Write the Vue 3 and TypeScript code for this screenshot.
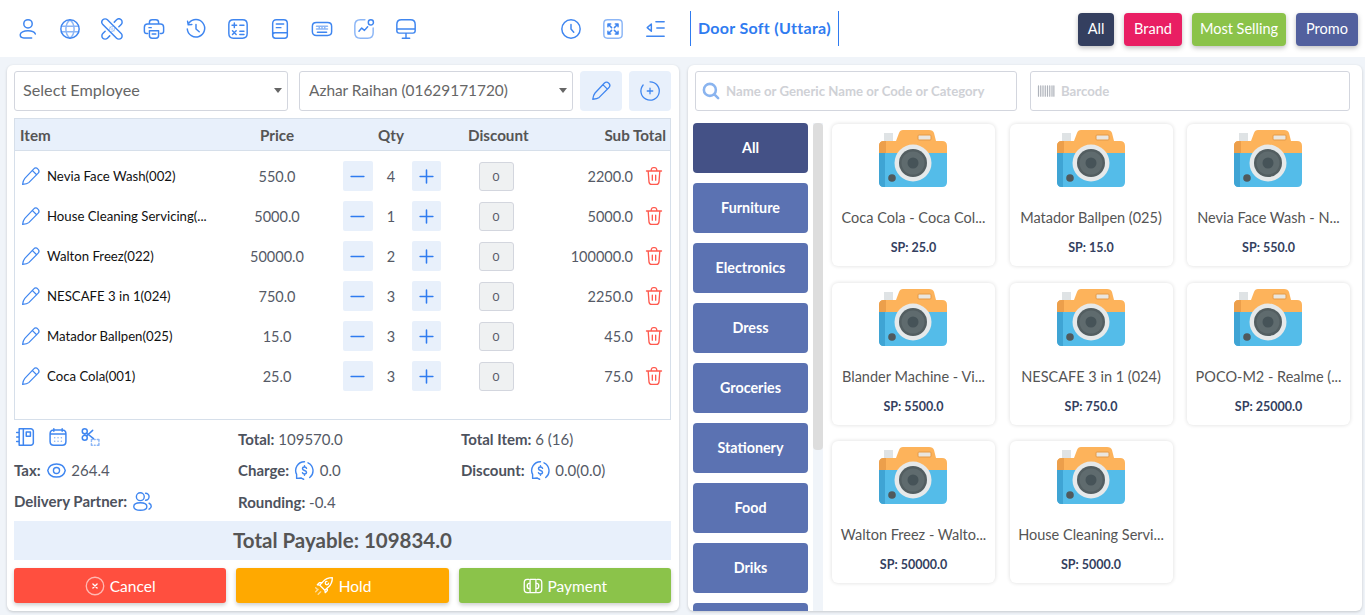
<template>
  <div class="pos">
    <header class="topbar">
      <div class="tools">
        <Ic v-for="n in leftTools" :key="n" :name="n" class="tool" />
      </div>
      <div class="tools tools-mid">
        <Ic v-for="n in midTools" :key="n" :name="n" class="tool" />
      </div>
      <div class="outlet">Door Soft (Uttara)</div>
      <div class="filters">
        <button class="filter f-all">All</button>
        <button class="filter f-brand">Brand</button>
        <button class="filter f-most">Most Selling</button>
        <button class="filter f-promo">Promo</button>
      </div>
    </header>

    <main class="content">
      <section class="panel cart">
        <div class="selects">
          <div class="select sel-1">Select Employee<span class="caret" /></div>
          <div class="select sel-2">Azhar Raihan (01629171720)<span class="caret" /></div>
          <button class="square"><Ic name="pencil" class="square-ic" /></button>
          <button class="square"><Ic name="plusCircle" class="square-ic" /></button>
        </div>

        <div class="table">
          <div class="grid head">
            <div>Item</div>
            <div class="c">Price</div>
            <div class="c">Qty</div>
            <div class="c">Discount</div>
            <div class="r">Sub Total</div>
          </div>
          <div class="rows">
            <div v-for="row in rows" :key="row.name" class="grid row">
              <div class="name"><Ic name="pencil" class="row-pen" /><span>{{ row.name }}</span></div>
              <div class="c">{{ row.price }}</div>
              <div class="qty">
                <span class="step"><Ic name="minus" class="step-ic" /></span>
                <span class="num">{{ row.qty }}</span>
                <span class="step"><Ic name="plus" class="step-ic" /></span>
              </div>
              <div class="c"><span class="disc">0</span></div>
              <div class="sub">{{ row.sub }}<Ic name="trash" class="trash" /></div>
            </div>
          </div>
        </div>

        <div class="summary">
          <div class="sum-icons">
            <Ic name="notebook" class="sum-ic" />
            <Ic name="calendar" class="sum-ic" />
            <Ic name="scissors" class="sum-ic" />
          </div>
          <div><b>Total:</b> 109570.0</div>
          <div><b>Total Item:</b> 6 (16)</div>
          <div><b>Tax:</b> <Ic name="eye" class="in-ic" /> 264.4</div>
          <div><b>Charge:</b> <Ic name="dollar" class="in-ic" /> 0.0</div>
          <div><b>Discount:</b> <Ic name="dollar" class="in-ic" /> 0.0(0.0)</div>
          <div><b>Delivery Partner:</b> <Ic name="people" class="in-ic" /></div>
          <div><b>Rounding:</b> -0.4</div>
        </div>

        <div class="payable">Total Payable: 109834.0</div>

        <div class="actions">
          <button class="act cancel"><Ic name="xCircle" class="act-ic" />Cancel</button>
          <button class="act hold"><Ic name="rocket" class="act-ic" />Hold</button>
          <button class="act pay"><Ic name="money" class="act-ic" />Payment</button>
        </div>
      </section>

      <section class="panel shop">
        <div class="searches">
          <div class="search s-name">
            <Ic name="search" class="search-ic" />
            <span>Name or Generic Name or Code or Category</span>
          </div>
          <div class="search s-code">
            <Ic name="barcode" class="code-ic" />
            <span>Barcode</span>
          </div>
        </div>

        <div class="catalog">
          <div class="cats">
            <button v-for="(c, i) in categories" :key="i" class="cat" :class="{ on: i === 0 }">{{ c }}</button>
          </div>
          <div class="track"><div class="thumb" /></div>
          <div class="products">
            <article v-for="p in products" :key="p.name" class="card">
              <svg class="camera" viewBox="0 0 68 57" width="68" height="57">
                <rect x="5" y="3" width="9" height="10" fill="#dfe3e5" />
                <path d="M17 11 20 3Q21 0 24 0H50Q54 0 55 3L57 11H63Q68 11 68 16V24H0V16Q0 11 5 11Z" fill="#fdb35b" />
                <path d="M0 16Q0 11 5 11H7V24H0Z" fill="#ec9f4b" />
                <rect x="39" y="5" width="13" height="5" rx="1" fill="#eae6df" stroke="#e59a47" />
                <path d="M0 23H68V52Q68 57 63 57H5Q0 57 0 52Z" fill="#54bce9" />
                <path d="M0 23H6V57H5Q0 57 0 52Z" fill="#3fa4d4" />
                <circle cx="34" cy="33" r="18.500" fill="#e6e9ea" />
                <circle cx="34" cy="33" r="14" fill="#535e61" />
                <circle cx="34" cy="33" r="11.500" fill="#5f6b6e" />
                <circle cx="34" cy="33" r="5.500" fill="#465358" />
                <circle cx="13" cy="48" r="3.800" fill="#50595c" />
              </svg>
              <div class="p-name">{{ p.name }}</div>
              <div class="p-price">SP: {{ p.price }}</div>
            </article>
          </div>
        </div>
      </section>
    </main>
  </div>
</template>

<script setup lang="ts">
import { h } from 'vue'

// [main strokes, lighter strokes]
const icons: Record<string, [string, string?]> = {
  user: ['M12 11a4.600 4.600 0 1 0 0-9.200 4.600 4.600 0 0 0 0 9.200ZM20 17.500c-1-2.600-4.400-3.500-8-3.500-4.600 0-8.500 1.500-8.500 4.300 0 2 1.700 3.400 4 3.400h8.500'],
  globe: ['M12 2a10 10 0 1 0 0 20 10 10 0 0 0 0-20Z', 'M12 2c-3.300 2.500-4.500 6-4.500 10s1.200 7.500 4.500 10c3.300-2.500 4.500-6 4.500-10S15.300 4.500 12 2ZM2.500 9h19M2.500 15h19'],
  bandage: ['M7 2 22 17A3.500 3.500 0 0 1 17 22L2 7A3.500 3.500 0 0 1 7 2ZM14.500 4.500 17 2A3.500 3.500 0 0 1 22 7L19.500 9.500M9.500 19.500 7 22A3.500 3.500 0 0 1 2 17L4.500 14.500', 'M10 10h.1M12 12h.1M14 14h.1M12 9.500h.1M14.500 12h.1M9.500 12h.1M12 14.500h.1'],
  printer: ['M7 6.500V5c0-2 1-3 3-3h4c2 0 3 1 3 3v1.500M5 17H4c-1.500 0-2.500-1-2.500-2.500V10c0-2 1.500-3.500 3.500-3.500h14c2 0 3.500 1.500 3.500 3.500v4.500c0 1.500-1 2.500-2.500 2.500h-1M7 14h10v5c0 2-1 3-3 3h-4c-2 0-3-1-3-3ZM6.500 10.500h2.500M10 17.500h4'],
  history: ['M4.400 5.500A9.500 9.500 0 1 1 2.500 12M2.800 3.500 3.500 7.500 7.500 7M12 7v5l3.500 3'],
  calc: ['M7 2h10c3.300 0 5 1.700 5 5v10c0 3.300-1.700 5-5 5H7c-3.300 0-5-1.700-5-5V7c0-3.300 1.700-5 5-5ZM5.500 8h5M8 5.500v5M14 8h4.500M14 14.500h4.500M14 18h4.500M6 14l4 4M10 14l-4 4'],
  book: ['M4 18.500V6c0-2.500 1.500-4 4-4h8c2.500 0 4 1.500 4 4v13c0 1.800-1.200 3-3 3H7c-1.800 0-3-1.300-3-3.500 0-1.500 1-2.500 2.500-2.500H20M8 6.500h8M8 10.500h5'],
  keyboard: ['M6 5h12c3 0 4.500 1.500 4.500 4v6c0 2.500-1.500 4-4.500 4H6c-3 0-4.500-1.500-4.500-4V9c0-2.500 1.500-4 4.500-4ZM7 15.500h10', 'M6 9h12M6 12h12M6 9v.1M9 9v3M12 9v3M15 9v3'],
  chart: ['M19.500 2a2.800 2.800 0 1 0 0 5.600 2.800 2.800 0 0 0 0-5.600ZM6.500 14.500l3-3.500 3 2.500 3.500-4', 'M13 2H8C3.500 2 2 4 2 8v8c0 4 1.500 6 6 6h8c4 0 6-2 6-6v-5'],
  monitor: ['M7 2h10c3.300 0 5 1.700 5 5v7c0 1.500-1 2.500-2.500 2.500h-15C3 16.500 2 15.500 2 14V7c0-3.300 1.700-5 5-5ZM2 12h20M12 16.500V22M8 22h8'],
  clock: ['M12 2a10 10 0 1 0 0 20 10 10 0 0 0 0-20ZM12 7v5l3 3.500'],
  expand: ['M10.500 10.500 6.500 6.500M6.500 9.500v-3h3M13.500 10.500l4-4M14.500 6.500h3v3M10.500 13.500l-4 4M6.500 14.500v3h3M13.500 13.500l4 4M17.500 14.500v3h-3', 'M6 2h12c2.700 0 4 1.300 4 4v12c0 2.700-1.300 4-4 4H6c-2.700 0-4-1.300-4-4V6c0-2.700 1.300-4 4-4Z'],
  collapse: ['M13 4h9M14 11h8M3 20h19M8 6.500 3.500 10.500 8 14.500Z'],
  pencil: ['M3 21c.3-2.500 1-5 2.500-6.800L15.500 3.500c1.500-1.500 3.500-1.500 5 0s1.500 3.500 0 5L10 19c-1.800 1.500-4.500 1.800-7 2ZM14 5l5 5'],
  plusCircle: ['M4.500 5.500A10 10 0 1 0 12 2M9 12h6M12 9v6'],
  minus: ['M3 12h18'],
  plus: ['M3 12h18M12 3v18'],
  trash: ['M3 6h18M8.500 5.500l.5-2C9.300 2.500 10 2 11 2h2c1 0 1.700.5 2 1.500l.5 2M5 6l1 13c.2 2 1.300 3 3 3h6c1.700 0 2.800-1 3-3l1-13M10 11v6M14 11v6'],
  notebook: ['M5 2h14c1.500 0 3 1.500 3 3v14c0 1.500-1.500 3-3 3H5ZM2 6.500h3M2 12h3M2 17.500h3M10 2v20M13.500 6h5v5h-5Z'],
  calendar: ['M7 2v3M17 2v3M3 8.500h18M7 3.500h10c3 0 4.500 1.500 4.500 4.500v9.500c0 3-1.500 4.500-4.500 4.500H7c-3 0-4.500-1.500-4.500-4.500V8c0-3 1.500-4.500 4.500-4.500Z', 'M8 13h.1M12 13h.1M16 13h.1M8 17h.1M12 17h.1M16 17h.1'],
  scissors: ['M4.500 2a3 3 0 1 0 0 6 3 3 0 0 0 0-6ZM4.500 10a3 3 0 1 0 0 6 3 3 0 0 0 0-6ZM7 7.500 15 14M7 10.500 14 4', 'M12.500 15h1M16 15h1M19.500 15h2v2M21.500 19.500v2.500h-2M17 22h-1M13.500 22h-1v-2M12.500 17.500v-1'],
  eye: ['M12 4.500c5 0 9 3 10 7.500-1 4.500-5 7.500-10 7.500S3 16.500 2 12c1-4.500 5-7.500 10-7.500ZM12 8.500a3.500 3.500 0 1 0 0 7 3.500 3.500 0 0 0 0-7Z'],
  dollar: ['M16 3.200A10 10 0 0 1 18 20M12 2a10 10 0 0 0-9 14.500L3 21l5-.5a10 10 0 0 0 3 1.500M14.300 9.500C14 8.500 13 8 12 8c-1.200 0-2.300.7-2.300 2 0 2.600 4.600 1.400 4.600 4 0 1.300-1.100 2-2.300 2-1 0-2-.5-2.300-1.500M12 6.500V8M12 16v1.500'],
  people: ['M9.500 2a4.500 4.500 0 1 0 0 9 4.500 4.500 0 0 0 0-9ZM2 18c0-3 3-4.500 7.500-4.500S17 15 17 18c0 2.500-3 4-7.500 4S2 20.500 2 18ZM15.500 2.500a4 4 0 0 1 0 8M19.500 14c1.500.7 2.500 2 2.500 3.500s-1 2.700-2.500 3.300'],
  xCircle: ['M9.500 9.500l5 5M14.500 9.500l-5 5', 'M12 1.500a10.500 10.500 0 1 0 0 21 10.500 10.500 0 0 0 0-21Z'],
  rocket: ['M22 2c-5 0-8.500 1.500-11.500 5L7 11l6 6 4-3.500c3.500-3 5-6.500 5-11.500ZM10 8H6.500L4 10.500l3 .5M16 14v3.500L13.500 20l-.5-3M15.500 6.500a2 2 0 1 0 2 2', 'M5 16l-3 3M8 19l-3 3M2 14l2 2'],
  money: ['M7 4H5C2.500 4 1.500 5.500 1.500 8v8c0 2.500 1 4 3.500 4h2M17 4h2c2.500 0 3.500 1.500 3.500 4v8c0 2.500-1 4-3.500 4h-2M8.500 4h7v16h-7ZM15.500 8.500c2 0 3.500 1.500 3.500 3.500s-1.500 3.500-3.500 3.500M8.500 8.500C6.500 8.500 5 10 5 12s1.500 3.500 3.500 3.500'],
  search: ['M10.500 2.500a8 8 0 1 0 0 16 8 8 0 0 0 0-16ZM16.500 16.500l5 5'],
  barcode: ['M2 5v14M5 5v14M8 5v14M11 5v14M14 5v14M17 5v14M20 5v14M22.500 5v14'],
}

// small functional icon, strokes come from the table above
const Ic = (props: { name: string }) => {
  const [main, light] = icons[props.name]
  return h('svg', { viewBox: '0 0 24 24', fill: 'none', stroke: 'currentColor', 'stroke-width': 1.6, 'stroke-linecap': 'round', 'stroke-linejoin': 'round' }, [
    h('path', { d: main }),
    light ? h('path', { d: light, opacity: 0.6 }) : null,
  ])
}
Ic.props = ['name']

const leftTools = ['user', 'globe', 'bandage', 'printer', 'history', 'calc', 'book', 'keyboard', 'chart', 'monitor']
const midTools = ['clock', 'expand', 'collapse']

const rows = [
  { name: 'Nevia Face Wash(002)', price: '550.0', qty: 4, sub: '2200.0' },
  { name: 'House Cleaning Servicing(...', price: '5000.0', qty: 1, sub: '5000.0' },
  { name: 'Walton Freez(022)', price: '50000.0', qty: 2, sub: '100000.0' },
  { name: 'NESCAFE 3 in 1(024)', price: '750.0', qty: 3, sub: '2250.0' },
  { name: 'Matador Ballpen(025)', price: '15.0', qty: 3, sub: '45.0' },
  { name: 'Coca Cola(001)', price: '25.0', qty: 3, sub: '75.0' },
]

// the ninth button is scrolled out of sight, its label is not visible
const categories = ['All', 'Furniture', 'Electronics', 'Dress', 'Groceries', 'Stationery', 'Food', 'Driks', '']

const products = [
  { name: 'Coca Cola - Coca Col...', price: '25.0' },
  { name: 'Matador Ballpen (025)', price: '15.0' },
  { name: 'Nevia Face Wash - N...', price: '550.0' },
  { name: 'Blander Machine - Vi...', price: '5500.0' },
  { name: 'NESCAFE 3 in 1 (024)', price: '750.0' },
  { name: 'POCO-M2 - Realme (...', price: '25000.0' },
  { name: 'Walton Freez - Walto...', price: '50000.0' },
  { name: 'House Cleaning Servi...', price: '5000.0' },
]
</script>

<style>
html, body { margin: 0; height: 100%; overflow: hidden; background: #f0f4f9; }
</style>

<style scoped>
.pos {
  width: 1365px;
  height: 615px;
  overflow: hidden;
  font-family: Lato, "Noto Sans", sans-serif;
  color: #555a66;
  background: #f0f4f9;
}

button { font-family: inherit; border: 0; cursor: pointer; padding: 0; }
svg { display: block; }

/* top bar */
.topbar {
  display: flex;
  align-items: center;
  height: 57px;
  padding: 0 7px 0 17px;
  box-sizing: border-box;
  background: #fff;
}
.tools { display: flex; gap: 20px; }
.tools-mid { margin-left: 143px; }
.tool { width: 22px; height: 22px; color: #3f86f0; }
.outlet {
  margin-left: 24px;
  height: 35px;
  line-height: 33px;
  padding: 0 7px;
  border-left: 1px solid #2f7bf0;
  border-right: 1px solid #2f7bf0;
  color: #2f7bf0;
  font-weight: 700;
  font-size: 16px;
  letter-spacing: .3px;
  white-space: nowrap;
}
.filters { display: flex; gap: 10px; margin-left: auto; margin-top: 1px; }
.filter {
  height: 33px;
  padding-bottom: 2px;
  border-radius: 4px;
  color: #fff;
  font-size: 14.500px;
  box-shadow: 0 2px 5px rgba(0, 0, 0, .25);
}
.f-all { width: 36px; background: #343f5f; }
.f-brand { width: 58px; background: #e91e63; }
.f-most { width: 94px; background: #8bc34a; }
.f-promo { width: 62px; background: #52609e; }

/* panels */
.content { display: flex; gap: 9px; padding: 8px 3px 0 7px; }
.panel {
  height: 546px;
  background: #fff;
  border-radius: 6px;
  box-sizing: border-box;
  box-shadow: 0 1px 3px rgba(0, 0, 0, .18);
}

.cart { width: 672px; padding: 6px 8px 6px 7px; }
.selects { display: flex; }
.select {
  position: relative;
  height: 40px;
  line-height: 36px;
  box-sizing: border-box;
  padding-left: 8px;
  border: 1px solid #d3d6de;
  border-radius: 3px;
  font-size: 16.200px;
  color: #666;
}
.sel-1 { width: 274px; margin-right: 11px; }
.sel-2 { width: 274px; margin-right: 7px; font-size: 15.400px; padding-left: 9px; }
.caret {
  position: absolute;
  right: 5px;
  top: 16px;
  border: 4px solid transparent;
  border-top: 5px solid #666;
  border-bottom: 0;
}
.square {
  display: flex;
  align-items: center;
  justify-content: center;
  width: 42px;
  height: 40px;
  margin-right: 7px;
  border-radius: 4px;
  background: #e8f0fb;
}
.square:last-child { margin-right: 0; }
.square-ic { width: 22px; height: 22px; color: #3f86f0; stroke-width: 1.400; }

/* cart table */
.table {
  height: 302px;
  margin-top: 7px;
  box-sizing: border-box;
  border: 1px solid #d6dfea;
}
.grid {
  display: grid;
  grid-template-columns: 220px 74px 154px 56px 142px;
  align-items: center;
  padding: 0 4px 0 5px;
}
.head {
  height: 32px;
  box-sizing: border-box;
  background: #e8f0fb;
  border-bottom: 1px solid #d6dfea;
  font-weight: 700;
  font-size: 15.200px;
  color: #555;
}
.c { text-align: center; }
.r { text-align: right; }
.rows { padding-top: 5px; }
.row { height: 40px; font-size: 14.500px; }
.name { display: flex; align-items: center; gap: 6px; color: #111; font-size: 13.200px; white-space: nowrap; }
.row-pen { width: 21px; height: 21px; color: #3f86f0; flex: none; stroke-width: 1.400; }
.qty { display: flex; align-items: center; justify-content: center; padding-left: 2px; }
.step {
  display: flex;
  align-items: center;
  justify-content: center;
  width: 29.500px;
  height: 30px;
  background: #e8f0fb;
  border-radius: 2px;
}
.step-ic { width: 17px; height: 17px; color: #2f7bf0; stroke-width: 2.200; }
.num { width: 39px; padding-right: 2px; box-sizing: border-box; text-align: center; }
.disc {
  display: inline-block;
  width: 35px;
  height: 29px;
  line-height: 27px;
  box-sizing: border-box;
  border: 1px solid #d3d6de;
  border-radius: 3px;
  background: #eff1f2;
  font-size: 12px;
  text-align: center;
}
.sub { display: flex; align-items: center; justify-content: flex-end; }
.trash { width: 20px; height: 20px; margin-left: 11px; margin-right: 2px; color: #ff5a4f; }

/* summary */
.summary {
  display: grid;
  grid-template-columns: 224px 223px 1fr;
  grid-auto-rows: 31.500px;
  align-items: center;
  height: 101px;
  padding-top: 3px;
  box-sizing: border-box;
  font-size: 15px;
}
.summary b { color: #4d525d; font-weight: 700; }
.sum-icons { display: flex; gap: 13px; margin: -3px 0 0 1px; }
.sum-ic { width: 20px; height: 20px; color: #3f86f0; stroke-width: 1.800; }
.in-ic { display: inline-block; width: 21px; height: 21px; color: #3f86f0; vertical-align: -5px; margin: 0 1px; }

.payable {
  height: 39px;
  line-height: 39px;
  background: #e8f0fb;
  text-align: center;
  font-size: 20.500px;
  font-weight: 700;
  color: #555;
}
.actions { display: grid; grid-template-columns: repeat(3, 1fr); gap: 10px; margin-top: 8px; }
.act {
  display: flex;
  align-items: center;
  justify-content: center;
  gap: 5px;
  height: 35px;
  border-radius: 3px;
  color: #fff;
  font-size: 15.500px;
  box-shadow: 0 2px 4px rgba(0, 0, 0, .2);
}
.act-ic { width: 20px; height: 20px; }
.cancel { background: #ff4f3f; }
.hold { background: #ffa900; }
.pay { background: #8bc34a; }

/* shop */
.shop { width: 674px; padding: 6px 0 0 5px; overflow: hidden; }
.searches { display: flex; gap: 13px; padding-left: 2px; }
.search {
  display: flex;
  align-items: center;
  height: 40px;
  box-sizing: border-box;
  border: 1px solid #d3d6de;
  border-radius: 3px;
  font-size: 13.200px;
  font-weight: 700;
  color: #cfd1d6;
}
.s-name { width: 322px; padding-left: 6px; gap: 6px; }
.s-code { width: 320px; padding-left: 6px; gap: 6px; }
.search-ic { width: 18px; height: 18px; color: #8ab4ef; stroke-width: 3.400; }
.code-ic { width: 18px; height: 18px; color: #aeb2ba; }

.catalog { display: flex; margin-top: 12px; height: 488px; }
.cats { width: 115px; display: flex; flex-direction: column; gap: 10px; overflow: hidden; flex: none; }
.cat {
  flex: none;
  height: 50px;
  padding-bottom: 2px;
  border-radius: 4px;
  background: #5b72b2;
  color: #fff;
  font-weight: 700;
  font-size: 14.300px;
}
.cat.on { background: #445186; }
.track { width: 10px; margin-left: 5px; background: #f0f4f9; flex: none; }
.thumb { height: 327px; border-radius: 4px; background: #ddd; }
.products {
  display: grid;
  grid-template-columns: repeat(3, 163px);
  grid-auto-rows: 142px;
  column-gap: 14.500px;
  row-gap: 16.500px;
  padding: 1px 0 0 9px;
}
.card {
  display: flex;
  flex-direction: column;
  align-items: center;
  border-radius: 6px;
  box-shadow: 0 0 4px rgba(0, 0, 0, .14);
}
.camera { margin: 6px 1px 0 0; }
.p-name { margin-top: 22px; font-size: 14.500px; color: #555; white-space: nowrap; }
.p-price { margin-top: 14px; font-size: 12.500px; font-weight: 700; color: #343f5f; }
</style>
